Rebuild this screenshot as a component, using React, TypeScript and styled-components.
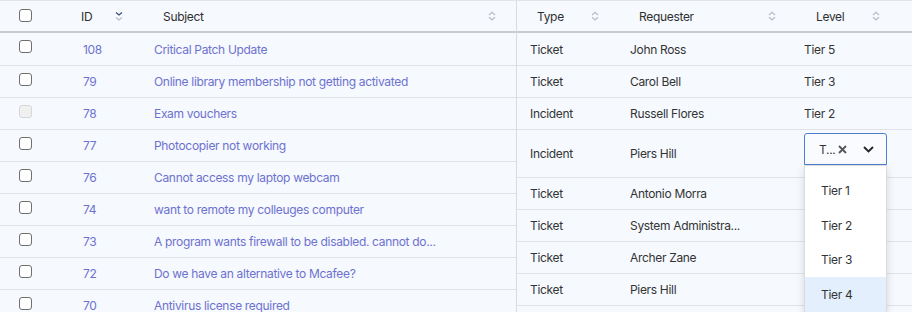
import React from "react";
import styled, { createGlobalStyle } from "styled-components";

const GlobalStyle = createGlobalStyle`
  html, body {
    margin: 0;
    padding: 0;
    background: #f6f9fe;
  }
  body {
    font-family: Inter, "Noto Sans", sans-serif;
    font-size: 12px;
    letter-spacing: -0.32px;
    color: #333;
  }
`;

interface ITicket {
  id: number;
  subject: string;
  type: string;
  requester: string;
  level: string;
  disabled?: boolean;
  editing?: boolean;
}

const tickets: ITicket[] = [
  { id: 108, subject: "Critical Patch Update", type: "Ticket", requester: "John Ross", level: "Tier 5" },
  { id: 79, subject: "Online library membership not getting activated", type: "Ticket", requester: "Carol Bell", level: "Tier 3" },
  { id: 78, subject: "Exam vouchers", type: "Incident", requester: "Russell Flores", level: "Tier 2", disabled: true },
  { id: 77, subject: "Photocopier not working", type: "Incident", requester: "Piers Hill", level: "Tier 4", editing: true },
  { id: 76, subject: "Cannot access my laptop webcam", type: "Ticket", requester: "Antonio Morra", level: "" },
  { id: 74, subject: "want to remote my colleuges computer", type: "Ticket", requester: "System Administra...", level: "" },
  { id: 73, subject: "A program wants firewall to be disabled. cannot do...", type: "Ticket", requester: "Archer Zane", level: "" },
  { id: 72, subject: "Do we have an alternative to Mcafee?", type: "Ticket", requester: "Piers Hill", level: "" },
  { id: 70, subject: "Antivirus license required", type: "Ticket", requester: "", level: "" },
];

const levels = ["Tier 1", "Tier 2", "Tier 3", "Tier 4"];

const Grid = styled.div`
  display: flex;
  width: 912px;
  height: 312px;
  overflow: hidden;
  border-top: 1px solid #e2e5ea;
  box-sizing: border-box;
`;

const Pane = styled.div<{ $width: number; $cols: string; $divider?: boolean }>`
  width: ${(p) => p.$width}px;
  flex: none;
  display: grid;
  grid-template-columns: ${(p) => p.$cols};
  grid-auto-rows: min-content;
  border-right: ${(p) => (p.$divider ? "1px solid #d9dce1" : "none")};
`;

const HeaderCell = styled.div<{ $pl: number; $pr: number }>`
  height: 30px;
  display: flex;
  align-items: center;
  padding: 0 ${(p) => p.$pr}px 0 ${(p) => p.$pl}px;
  border-bottom: 2px solid #c9cbcf;
  color: #2f2f2f;
  font-size: 12px;
`;

const SortButton = styled.span`
  margin-left: auto;
  display: flex;
  align-items: center;
`;

const Cell = styled.div<{ $pl: number; $tall?: boolean; $link?: boolean }>`
  height: ${(p) => (p.$tall ? 47 : 31)}px;
  display: flex;
  align-items: center;
  padding-left: ${(p) => p.$pl}px;
  border-bottom: 1px solid #dfe2e6;
  color: ${(p) => (p.$link ? "#6d71d0" : "#333")};
  white-space: nowrap;
  position: relative;
`;

const FirstCell = styled(Cell)`
  height: 32px;
`;

const Box = styled.span<{ $disabled?: boolean; $header?: boolean }>`
  width: 11px;
  height: 11px;
  border: 1.5px solid ${(p) => (p.$disabled ? "#d6d6d6" : "#6f6f6f")};
  background: ${(p) => (p.$disabled ? "#f0f0f0" : "#fff")};
  border-radius: 3px;
  margin-top: ${(p) => (p.$header ? -2 : -5)}px;
`;

const Select = styled.div`
  align-self: flex-start;
  margin-top: 3px;
  width: 83px;
  height: 32px;
  border: 1px solid #4f7fd1;
  border-radius: 3px 3px 0 0;
  background: #f9fbff;
  display: flex;
  align-items: center;
  padding-left: 14px;
  box-sizing: border-box;
  position: relative;
`;

const SelectValue = styled.span`
  color: #333;
`;

const Clear = styled.span`
  margin-left: 3px;
  display: flex;
`;

const Caret = styled.span`
  margin-left: 16px;
  display: flex;
`;

const ListBox = styled.ul`
  position: absolute;
  left: -1px;
  top: 31px;
  width: 83px;
  box-sizing: border-box;
  margin: 0;
  padding: 7px 0 0;
  list-style: none;
  background: #fff;
  border: 1px solid #dcdcdc;
  box-shadow: 0 3px 8px rgba(0, 0, 0, 0.14);
  z-index: 2;
`;

const Option = styled.li<{ $active?: boolean }>`
  height: 34.7px;
  display: flex;
  align-items: center;
  padding-left: 16px;
  color: #333;
  background: ${(p) => (p.$active ? "#e3effc" : "transparent")};
`;

const SortIcon = ({ active }: { active?: boolean }) =>
  active ? (
    <svg width="8" height="12" viewBox="0 0 8 12">
      <path d="M1 2.5 L4 5 L7 2.5" fill="none" stroke="#3b4a7a" strokeWidth="1.2" />
      <path d="M1 7.5 L4 10 L7 7.5" fill="none" stroke="#b8bcc4" strokeWidth="1.2" />
    </svg>
  ) : (
    <svg width="8" height="12" viewBox="0 0 8 12">
      <path d="M1 5 L4 2.2 L7 5" fill="none" stroke="#b8bcc4" strokeWidth="1.2" />
      <path d="M1 7.2 L4 10 L7 7.2" fill="none" stroke="#b8bcc4" strokeWidth="1.2" />
    </svg>
  );

const Header = ({
  label,
  pl,
  pr,
  active,
}: {
  label: string;
  pl: number;
  pr: number;
  active?: boolean;
}) => (
  <HeaderCell $pl={pl} $pr={pr}>
    {label}
    <SortButton>
      <SortIcon active={active} />
    </SortButton>
  </HeaderCell>
);

const LevelEditor = () => (
  <Select>
    <SelectValue>T...</SelectValue>
    <Clear>
      <svg width="9" height="9" viewBox="0 0 9 9">
        <path d="M1 1 L8 8 M8 1 L1 8" stroke="#555" strokeWidth="1.8" />
      </svg>
    </Clear>
    <Caret>
      <svg width="11" height="7" viewBox="0 0 11 7">
        <path d="M1 1 L5.5 5.5 L10 1" fill="none" stroke="#222" strokeWidth="1.8" />
      </svg>
    </Caret>
    <ListBox>
      {levels.map((l) => (
        <Option key={l} $active={l === "Tier 4"}>
          {l}
        </Option>
      ))}
    </ListBox>
  </Select>
);

export default function App() {
  return (
    <>
      <GlobalStyle />
      <Grid>
        <Pane $width={516} $cols="64px 73px 1fr" $divider>
          <HeaderCell $pl={19} $pr={0}>
            <Box $header />
          </HeaderCell>
          <Header label="ID" pl={17} pr={14} active />
          <Header label="Subject" pl={26} pr={20} />
          {tickets.map((t, i) => {
            const C = i === 0 ? FirstCell : Cell;
            return (
              <React.Fragment key={t.id}>
                <C $pl={19}>
                  <Box $disabled={t.disabled} />
                </C>
                <C $pl={19} $link>
                  {t.id}
                </C>
                <C $pl={17} $link>
                  {t.subject}
                </C>
              </React.Fragment>
            );
          })}
        </Pane>
        <Pane $width={396} $cols="94px 180px 1fr">
          <Header label="Type" pl={20} pr={12} />
          <Header label="Requester" pl={28} pr={15} />
          <Header label="Level" pl={25} pr={33} />
          {tickets.slice(0, 8).map((t, i) => {
            const C = i === 0 ? FirstCell : Cell;
            return (
              <React.Fragment key={t.id}>
                <C $pl={13} $tall={t.editing}>
                  {t.type}
                </C>
                <C $pl={19} $tall={t.editing}>
                  {t.requester}
                </C>
                <C $pl={13} $tall={t.editing}>
                  {t.editing ? <LevelEditor /> : t.level}
                </C>
              </React.Fragment>
            );
          })}
        </Pane>
      </Grid>
    </>
  );
}
